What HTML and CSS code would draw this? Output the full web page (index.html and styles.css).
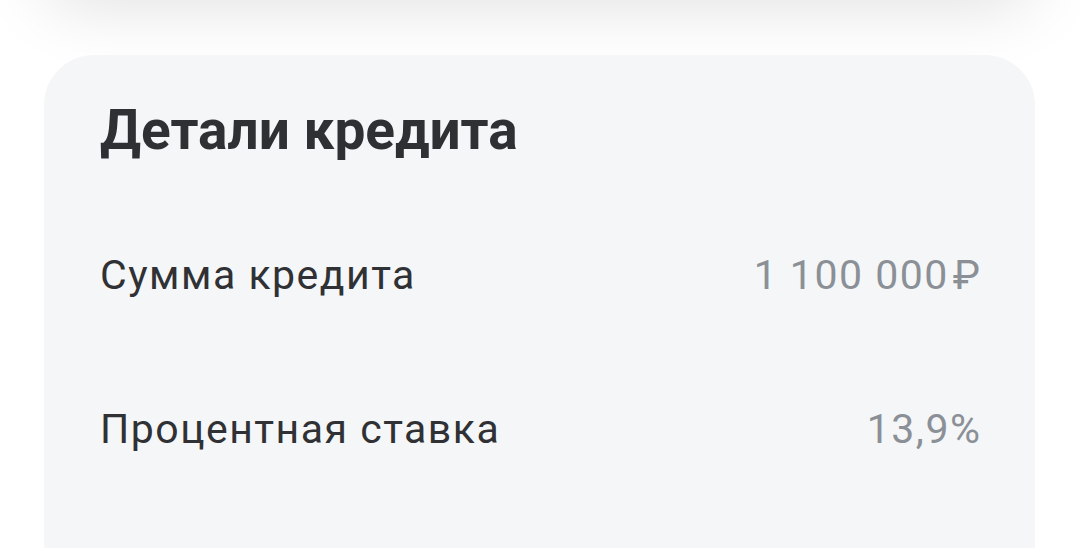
FILE: index.html
```html
<!DOCTYPE html>
<html lang="ru">
<head>
    <meta charset="UTF-8">
    <meta name="viewport" content="width=device-width, initial-scale=1.0">
    <title>Детали кредита</title>
    <link rel="stylesheet" href="styles.css">
</head>
<body>
    <div class="page">
        <!-- bottom of the previous block, scrolled up -->
        <div class="prev-card"></div>

        <div class="card">
            <h2 class="card-title">Детали кредита</h2>
            <div class="row">
                <span class="label">Сумма кредита</span>
                <span class="value">1 100 000<span class="currency">₽</span></span>
            </div>
            <div class="row">
                <span class="label">Процентная ставка</span>
                <span class="value">13,9%</span>
            </div>
        </div>
    </div>
</body>
</html>
```

FILE: styles.css
```css
body {
    margin: 0;
    background-color: #ffffff;
    font-family: Roboto, "Noto Sans", Arial, sans-serif;
    overflow: hidden;
}
.page {
    padding: 0 45px 0 44px;
}
.prev-card {
    height: 60px;
    margin-top: -64px;
    background-color: #ffffff;
    border-radius: 50px;
    box-shadow: 0 4px 70px rgba(0, 0, 0, 0.15);
}
.card {
    margin-top: 59px;
    padding: 42px 55px 0 56px;
    background-color: #f5f6f8;
    border-radius: 50px 50px 0 0;
    min-height: 600px;
}
.card-title {
    margin: 0 0 34px;
    font-size: 55px;
    font-weight: 700;
    line-height: 67px;
    color: #2f3034;
}
.row {
    display: flex;
    justify-content: space-between;
    align-items: baseline;
    padding: 53px 0;
    font-size: 41px;
    line-height: 48px;
    letter-spacing: 1.5px;
}
.label {
    color: #303134;
}
.value {
    color: #8b9097;
    margin-right: -1.5px;
}
.currency {
    margin-left: 4px;
}
```
